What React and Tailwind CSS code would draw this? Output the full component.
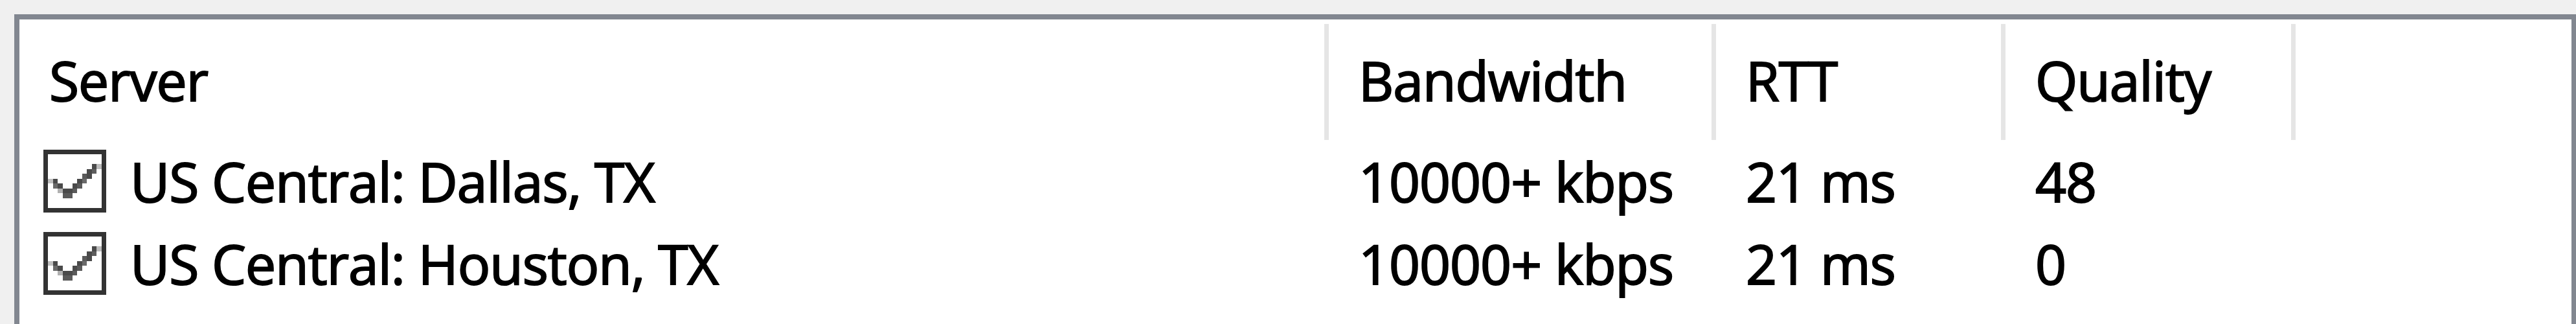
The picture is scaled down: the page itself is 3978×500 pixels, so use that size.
import React from "react";

const CHECK_PIXELS = [
  [10, 3, "#4a4a4a"], [11, 3, "#bdbdbd"],
  [9, 4, "#4a4a4a"], [10, 4, "#5e5e5e"],
  [8, 5, "#5a5a5a"], [9, 5, "#4a4a4a"],
  [1, 6, "#c0c0c0"], [2, 6, "#4a4a4a"], [7, 6, "#4a4a4a"], [8, 6, "#6a6a6a"],
  [2, 7, "#6a6a6a"], [3, 7, "#4a4a4a"], [6, 7, "#4a4a4a"], [7, 7, "#5a5a5a"],
  [3, 8, "#b0b0b0"], [4, 8, "#4a4a4a"], [5, 8, "#4a4a4a"], [6, 8, "#5a5a5a"],
  [4, 9, "#5a5a5a"], [5, 9, "#5a5a5a"],
];

function CheckBox() {
  return (
    <svg
      width="97"
      height="97"
      viewBox="0 0 13 13"
      shapeRendering="crispEdges"
      className="block shrink-0"
    >
      <rect x="0.5" y="0.5" width="12" height="12" fill="#ffffff" stroke="#333333" strokeWidth="1" />
      {CHECK_PIXELS.map(([x, y, c]) => (
        <rect key={`${x}-${y}`} x={x} y={y} width="1" height="1" fill={c} />
      ))}
    </svg>
  );
}

const rows = [
  { server: "US Central: Dallas, TX", bw: "10000+ kbps", rtt: "21 ms", q: "48" },
  { server: "US Central: Houston, TX", bw: "10000+ kbps", rtt: "21 ms", q: "0" },
];

const txt =
  "text-[84px] leading-[84px] text-black whitespace-nowrap tracking-[-1px] [-webkit-text-stroke:2px_#000]";

export default function App() {
  return (
    <div
      className="w-[3978px] h-[500px] overflow-hidden bg-[#f0f0f0] pt-[22px] pl-[22px]"
      style={{ fontFamily: '"Open Sans", "Noto Sans", sans-serif' }}
    >
      <div className="h-[500px] bg-white border-[#828790] border-t-[8px] border-l-[8px] border-r-[7px]">
        {/* header */}
        <div className="flex h-[186px] pt-[7px]">
          <div className="w-[2022px] shrink-0 border-r-[7px] border-[#e5e5e5] pl-[46px] pt-[45px]">
            <span className={txt}>Server</span>
          </div>
          <div className="w-[598px] shrink-0 border-r-[7px] border-[#e5e5e5] pl-[46px] pt-[45px]">
            <span className={txt}>Bandwidth</span>
          </div>
          <div className="w-[447px] shrink-0 border-r-[7px] border-[#e5e5e5] pl-[46px] pt-[45px]">
            <span className={txt}>RTT</span>
          </div>
          <div className="w-[448px] shrink-0 border-r-[7px] border-[#e5e5e5] pl-[46px] pt-[45px]">
            <span className={txt}>Quality</span>
          </div>
        </div>
        {/* rows */}
        {rows.map((r) => (
          <div key={r.server} className="flex h-[127px]">
            <div className="w-[2022px] shrink-0 flex items-start pl-[37px]">
              <div className="mt-[15px]">
                <CheckBox />
              </div>
              <span className={`${txt} ml-[37px] mt-[22px]`}>{r.server}</span>
            </div>
            <div className="w-[598px] shrink-0 pl-[46px] pt-[22px]">
              <span className={txt}>{r.bw}</span>
            </div>
            <div className="w-[447px] shrink-0 pl-[46px] pt-[22px]">
              <span className={txt}>{r.rtt}</span>
            </div>
            <div className="w-[448px] shrink-0 pl-[46px] pt-[22px]">
              <span className={txt}>{r.q}</span>
            </div>
          </div>
        ))}
      </div>
    </div>
  );
}
